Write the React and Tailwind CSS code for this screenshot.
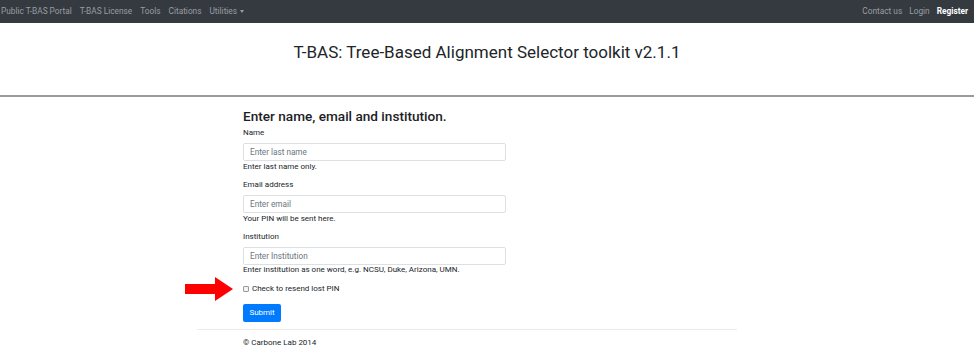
export default function App() {
  const font = { fontFamily: 'Roboto, "Liberation Sans", Arial, sans-serif' };
  const inputCls = "mt-[5px] w-[263px] h-[18px] border border-[#dcdfe3] rounded-[2px] flex items-center pl-[6px] text-[8.2px] text-[#6c757d]";
  return (
    <div className="w-[974px] h-[352px] bg-white overflow-hidden text-[#212529]" style={font}>
      <nav className="h-[23px] bg-[#343a40] flex items-center justify-between text-[8.3px] text-[#9a9da0]">
        <div className="flex items-center gap-[8px] pl-[1px]">
          <span>Public T-BAS Portal</span>
          <span>T-BAS License</span>
          <span>Tools</span>
          <span>Citations</span>
          <span className="flex items-center gap-[3px]">
            Utilities
            <span className="inline-block w-0 h-0 border-l-[2.5px] border-r-[2.5px] border-t-[3px] border-l-transparent border-r-transparent border-t-[#9a9da0]"></span>
          </span>
        </div>
        <div className="flex items-center gap-[7px] pr-[6px]">
          <span>Contact us</span>
          <span>Login</span>
          <span className="text-white font-bold">Register</span>
        </div>
      </nav>
      <div className="h-[72px] flex justify-center pt-[18px]">
        <h1 className="text-[17px] leading-[22px] text-[#212529]">T-BAS: Tree-Based Alignment Selector toolkit v2.1.1</h1>
      </div>
      <div className="h-[2px] bg-[#9b9b9b]"></div>
      <div className="w-[540px] ml-[197px]">
        <div className="pl-[46px] pt-[10px]">
          <h2 className="text-[13.6px] leading-[18px] font-medium text-[#1d2125]">Enter name, email and institution.</h2>
          <div className="mt-[3px] text-[8px] leading-[10px]">Name</div>
          <div className={inputCls}>Enter last name</div>
          <div className="mt-[1px] text-[8px] leading-[10px]">Enter last name only.</div>
          <div className="mt-[8px] text-[8px] leading-[10px]">Email address</div>
          <div className={inputCls}>Enter email</div>
          <div className="mt-[1px] text-[8px] leading-[10px]">Your PIN will be sent here.</div>
          <div className="mt-[8px] text-[8px] leading-[10px]">Institution</div>
          <div className={inputCls}>Enter Institution</div>
          <div className="mt-0 text-[8px] leading-[10px]">Enter institution as one word, e.g. NCSU, Duke, Arizona, UMN.</div>
          <div className="mt-[9px] flex items-center gap-[3px] relative">
            <span className="w-[6px] h-[6px] border border-[#9a9a9a] rounded-[1px] bg-[#f3f3f3]"></span>
            <span className="text-[8px] leading-[10px]">Check to resend lost PIN</span>
            <svg className="absolute left-[-58px] top-[-7px]" width="48" height="24" viewBox="0 0 48 24">
              <polygon points="0,7 30,7 30,0 48,12 30,24 30,17 0,17" fill="#ff0000" />
            </svg>
          </div>
          <div className="mt-[10px] w-[38px] h-[18px] bg-[#007bff] rounded-[2px] flex items-center justify-center text-white text-[8px]">Submit</div>
        </div>
        <div className="mt-[7px] h-px bg-[#ececec]"></div>
        <div className="pl-[46px] mt-[8px] text-[8px] leading-[10px]">© Carbone Lab 2014</div>
      </div>
    </div>
  );
}
